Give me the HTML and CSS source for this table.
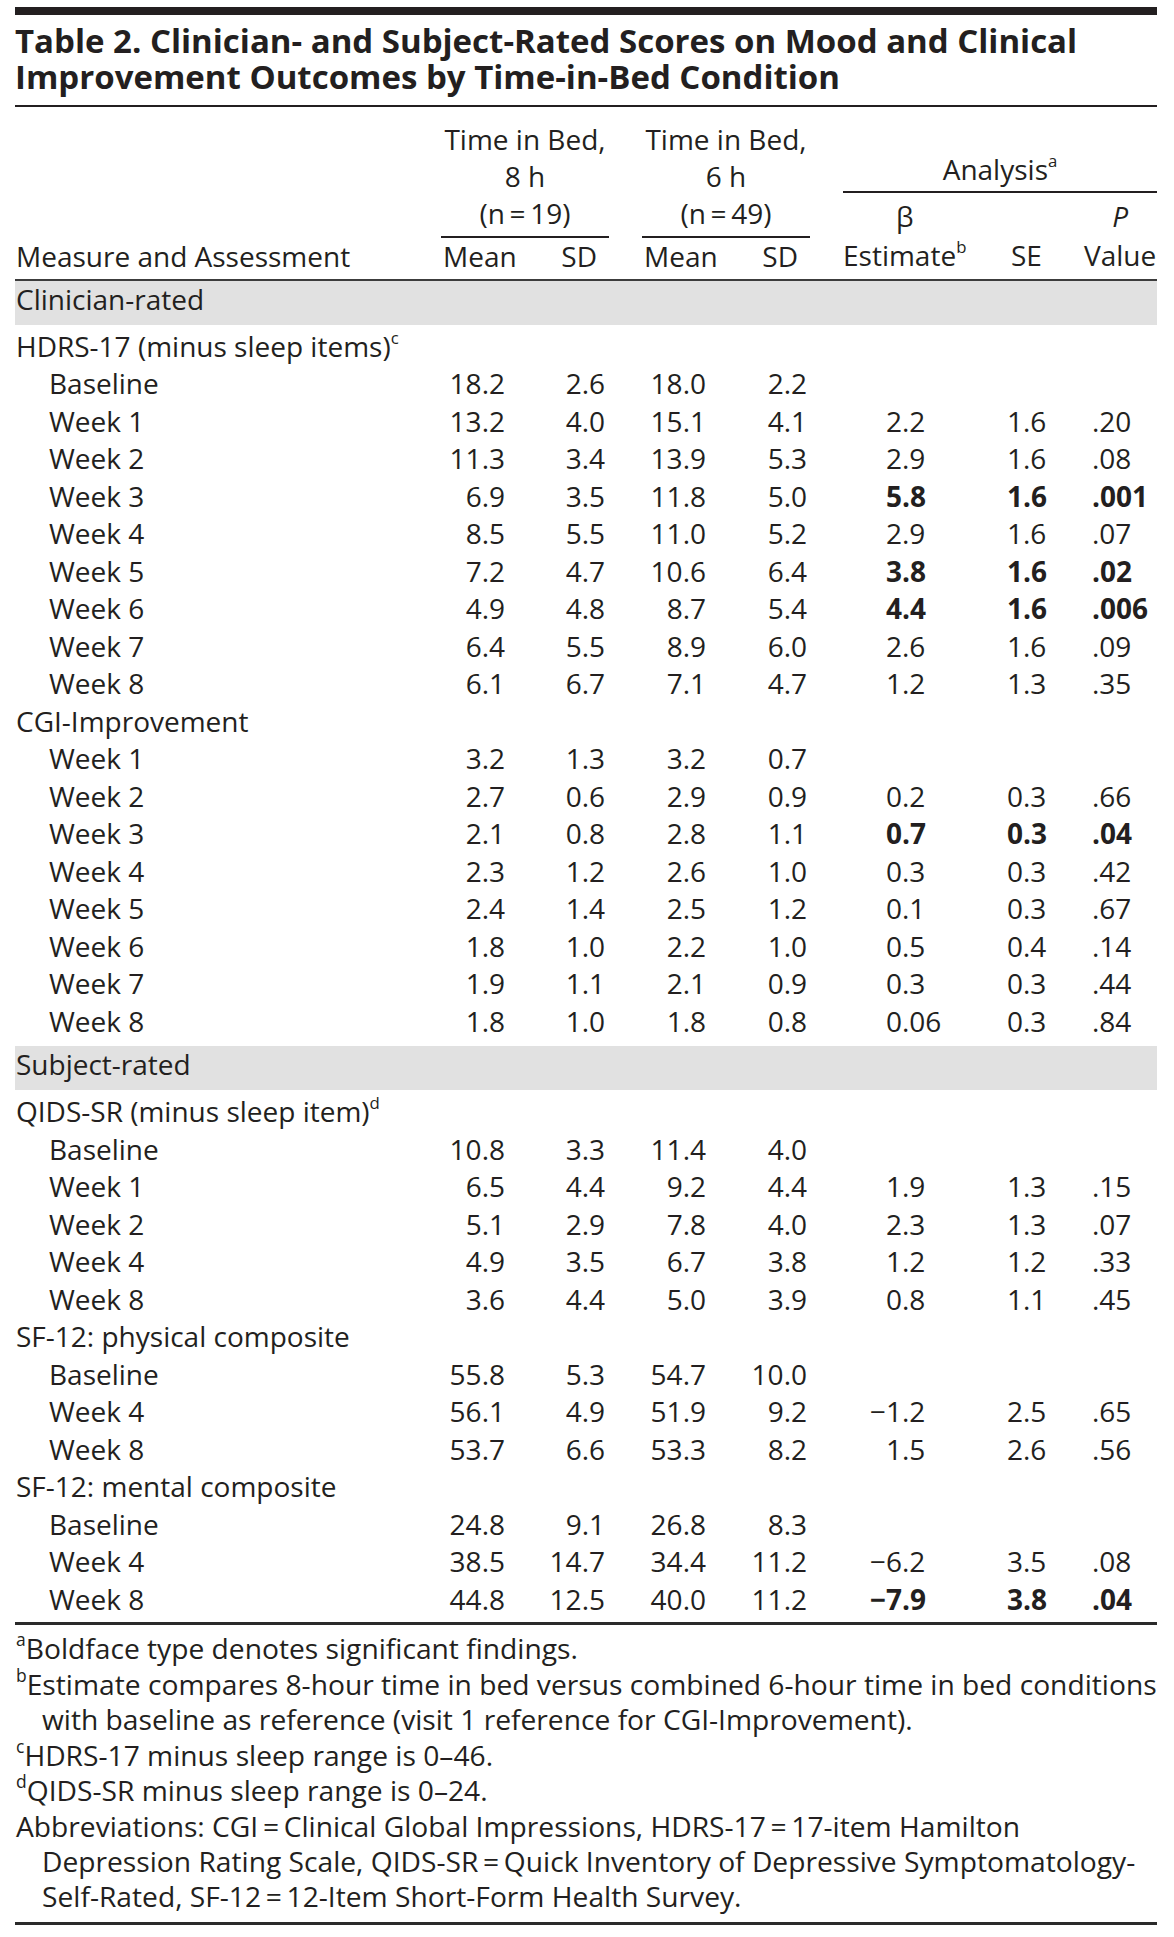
FILE: index.html
```html
<!DOCTYPE html>
<html lang="en">
<head>
<meta charset="utf-8">
<title>Table 2</title>
<link rel="stylesheet" href="styles.css">
</head>
<body>
<div class="page">
  <div class="toprule"></div>
  <h1 class="title">Table 2. Clinician- and Subject-Rated Scores on Mood and Clinical<br>Improvement Outcomes by Time-in-Bed Condition</h1>

  <div class="thead">
    <div class="h-lbl">Measure and Assessment</div>
    <div class="grp">
      <div class="grp-t">Time in Bed,<br>8 h<br>(n&#8201;=&#8201;19)</div>
      <div class="grp-sub"><span class="h-mean">Mean</span><span class="h-sd">SD</span></div>
    </div>
    <div class="grp">
      <div class="grp-t">Time in Bed,<br>6 h<br>(n&#8201;=&#8201;49)</div>
      <div class="grp-sub"><span class="h-mean">Mean</span><span class="h-sd">SD</span></div>
    </div>
    <div class="ana">
      <div class="ana-t">Analysis<sup>a</sup></div>
      <div class="ana-sub">
        <div class="h-est">β<br>Estimate<sup>b</sup></div>
        <div class="h-se">SE</div>
        <div class="h-p"><i>P</i><br>Value</div>
      </div>
    </div>
  </div>

  <div class="tbody">
    <div class="band">Clinician-rated</div>
    <div class="row"><span class="lbl">HDRS-17 (minus sleep items)<sup>c</sup></span></div>
    <div class="row"><span class="lbl sub">Baseline</span><span>18.2</span><span>2.6</span><span>18.0</span><span>2.2</span></div>
    <div class="row"><span class="lbl sub">Week 1</span><span>13.2</span><span>4.0</span><span>15.1</span><span>4.1</span><span><span class="ip">2</span>.2</span><span>1.6</span><span>.20</span></div>
    <div class="row"><span class="lbl sub">Week 2</span><span>11.3</span><span>3.4</span><span>13.9</span><span>5.3</span><span><span class="ip">2</span>.9</span><span>1.6</span><span>.08</span></div>
    <div class="row sig"><span class="lbl sub">Week 3</span><span>6.9</span><span>3.5</span><span>11.8</span><span>5.0</span><span><span class="ip">5</span>.8</span><span>1.6</span><span>.001</span></div>
    <div class="row"><span class="lbl sub">Week 4</span><span>8.5</span><span>5.5</span><span>11.0</span><span>5.2</span><span><span class="ip">2</span>.9</span><span>1.6</span><span>.07</span></div>
    <div class="row sig"><span class="lbl sub">Week 5</span><span>7.2</span><span>4.7</span><span>10.6</span><span>6.4</span><span><span class="ip">3</span>.8</span><span>1.6</span><span>.02</span></div>
    <div class="row sig"><span class="lbl sub">Week 6</span><span>4.9</span><span>4.8</span><span>8.7</span><span>5.4</span><span><span class="ip">4</span>.4</span><span>1.6</span><span>.006</span></div>
    <div class="row"><span class="lbl sub">Week 7</span><span>6.4</span><span>5.5</span><span>8.9</span><span>6.0</span><span><span class="ip">2</span>.6</span><span>1.6</span><span>.09</span></div>
    <div class="row"><span class="lbl sub">Week 8</span><span>6.1</span><span>6.7</span><span>7.1</span><span>4.7</span><span><span class="ip">1</span>.2</span><span>1.3</span><span>.35</span></div>
    <div class="row"><span class="lbl">CGI-Improvement</span></div>
    <div class="row"><span class="lbl sub">Week 1</span><span>3.2</span><span>1.3</span><span>3.2</span><span>0.7</span></div>
    <div class="row"><span class="lbl sub">Week 2</span><span>2.7</span><span>0.6</span><span>2.9</span><span>0.9</span><span><span class="ip">0</span>.2</span><span>0.3</span><span>.66</span></div>
    <div class="row sig"><span class="lbl sub">Week 3</span><span>2.1</span><span>0.8</span><span>2.8</span><span>1.1</span><span><span class="ip">0</span>.7</span><span>0.3</span><span>.04</span></div>
    <div class="row"><span class="lbl sub">Week 4</span><span>2.3</span><span>1.2</span><span>2.6</span><span>1.0</span><span><span class="ip">0</span>.3</span><span>0.3</span><span>.42</span></div>
    <div class="row"><span class="lbl sub">Week 5</span><span>2.4</span><span>1.4</span><span>2.5</span><span>1.2</span><span><span class="ip">0</span>.1</span><span>0.3</span><span>.67</span></div>
    <div class="row"><span class="lbl sub">Week 6</span><span>1.8</span><span>1.0</span><span>2.2</span><span>1.0</span><span><span class="ip">0</span>.5</span><span>0.4</span><span>.14</span></div>
    <div class="row"><span class="lbl sub">Week 7</span><span>1.9</span><span>1.1</span><span>2.1</span><span>0.9</span><span><span class="ip">0</span>.3</span><span>0.3</span><span>.44</span></div>
    <div class="row"><span class="lbl sub">Week 8</span><span>1.8</span><span>1.0</span><span>1.8</span><span>0.8</span><span><span class="ip">0</span>.06</span><span>0.3</span><span>.84</span></div>

    <div class="band band-2">Subject-rated</div>
    <div class="row"><span class="lbl">QIDS-SR (minus sleep item)<sup>d</sup></span></div>
    <div class="row"><span class="lbl sub">Baseline</span><span>10.8</span><span>3.3</span><span>11.4</span><span>4.0</span></div>
    <div class="row"><span class="lbl sub">Week 1</span><span>6.5</span><span>4.4</span><span>9.2</span><span>4.4</span><span><span class="ip">1</span>.9</span><span>1.3</span><span>.15</span></div>
    <div class="row"><span class="lbl sub">Week 2</span><span>5.1</span><span>2.9</span><span>7.8</span><span>4.0</span><span><span class="ip">2</span>.3</span><span>1.3</span><span>.07</span></div>
    <div class="row"><span class="lbl sub">Week 4</span><span>4.9</span><span>3.5</span><span>6.7</span><span>3.8</span><span><span class="ip">1</span>.2</span><span>1.2</span><span>.33</span></div>
    <div class="row"><span class="lbl sub">Week 8</span><span>3.6</span><span>4.4</span><span>5.0</span><span>3.9</span><span><span class="ip">0</span>.8</span><span>1.1</span><span>.45</span></div>
    <div class="row"><span class="lbl">SF-12: physical composite</span></div>
    <div class="row"><span class="lbl sub">Baseline</span><span>55.8</span><span>5.3</span><span>54.7</span><span>10.0</span></div>
    <div class="row"><span class="lbl sub">Week 4</span><span>56.1</span><span>4.9</span><span>51.9</span><span>9.2</span><span><span class="ip">−1</span>.2</span><span>2.5</span><span>.65</span></div>
    <div class="row"><span class="lbl sub">Week 8</span><span>53.7</span><span>6.6</span><span>53.3</span><span>8.2</span><span><span class="ip">1</span>.5</span><span>2.6</span><span>.56</span></div>
    <div class="row"><span class="lbl">SF-12: mental composite</span></div>
    <div class="row"><span class="lbl sub">Baseline</span><span>24.8</span><span>9.1</span><span>26.8</span><span>8.3</span></div>
    <div class="row"><span class="lbl sub">Week 4</span><span>38.5</span><span>14.7</span><span>34.4</span><span>11.2</span><span><span class="ip">−6</span>.2</span><span>3.5</span><span>.08</span></div>
    <div class="row sig"><span class="lbl sub">Week 8</span><span>44.8</span><span>12.5</span><span>40.0</span><span>11.2</span><span><span class="ip">−7</span>.9</span><span>3.8</span><span>.04</span></div>
  </div>

  <div class="notes">
    <p><sup>a</sup>Boldface type denotes significant findings.</p>
    <p><sup>b</sup>Estimate compares 8-hour time in bed versus combined 6-hour time in bed conditions<br>with baseline as reference (visit 1 reference for CGI-Improvement).</p>
    <p><sup>c</sup>HDRS-17 minus sleep range is 0–46.</p>
    <p><sup>d</sup>QIDS-SR minus sleep range is 0–24.</p>
    <p>Abbreviations: CGI&#8201;=&#8201;Clinical Global Impressions, HDRS-17&#8201;=&#8201;17-item Hamilton<br>Depression Rating Scale, QIDS-SR&#8201;=&#8201;Quick Inventory of Depressive Symptomatology-<br>Self-Rated, SF-12&#8201;=&#8201;12-Item Short-Form Health Survey.</p>
  </div>
</div>
</body>
</html>
```

FILE: styles.css
```css
html, body {
  margin: 0;
  padding: 0;
  background: #ffffff;
}

body {
  color: #231f20;
  font-family: "Open Sans", "Noto Sans", sans-serif;
  font-size: 28px;
}

.page {
  width: 1142px;
  margin-left: 15px;
  padding-top: 7px;
}

.toprule {
  height: 8px;
  background: #231f20;
}

.title {
  margin: 0;
  padding: 7.6px 0 10.4px;
  font-size: 33px;
  font-weight: 700;
  line-height: 36px;
  letter-spacing: 0;
  white-space: nowrap;
  border-bottom: 2px solid #231f20;
}

sup {
  font-size: 0.6em;
  line-height: 0;
  vertical-align: 0.75em;
}

/* ---------- header ---------- */
.thead {
  display: flex;
  align-items: flex-end;
  padding: 14px 0 4px;
  border-bottom: 2px solid #3c3c3c;
  line-height: 37px;
}

.h-lbl {
  width: 425px;
  padding-left: 1px;
}

.grp {
  width: 168px;
  margin-right: 33px;
}

.grp-t {
  text-align: center;
  padding-bottom: 4px;
  border-bottom: 2px solid #231f20;
}

.grp-sub {
  display: flex;
  justify-content: space-between;
}

.h-mean {
  padding-left: 2px;
}

.h-sd {
  padding-right: 12px;
}

.ana {
  width: 314px;
}

.ana-t {
  text-align: center;
  padding-bottom: 3px;
  border-bottom: 2px solid #231f20;
}

.ana-sub {
  display: grid;
  grid-template-columns: 152px 75px 87px;
  align-items: end;
  padding-top: 4px;
  line-height: 39px;
}

.h-est {
  justify-self: start;
  text-align: center;
}

.h-se {
  padding-left: 16px;
}

.h-p {
  justify-self: start;
  padding-left: 14px;
  text-align: center;
}

/* ---------- body ---------- */
.tbody {
  padding-bottom: 4px;
  border-bottom: 3px solid #2a2a2a;
}

.band {
  height: 44px;
  line-height: 37.5px;
  padding-left: 1px;
  margin-bottom: 3px;
  background: #e1e1e1;
  box-sizing: border-box;
}

.band-2 {
  margin-top: 6px;
}

.row {
  display: grid;
  grid-template-columns: 426px 84px 84px 33px 84px 84px 33px 152px 75px 87px;
  height: 37.5px;
  line-height: 37.5px;
  white-space: nowrap;
}

.row > :nth-child(1) { grid-column: 1; }
.row > :nth-child(2) { grid-column: 2; text-align: right; padding-right: 20px; }
.row > :nth-child(3) { grid-column: 3; text-align: right; padding-right: 4px; }
.row > :nth-child(4) { grid-column: 5; text-align: right; padding-right: 20px; }
.row > :nth-child(5) { grid-column: 6; text-align: right; padding-right: 3px; }
.row > :nth-child(6) { grid-column: 8; }
.row > :nth-child(7) { grid-column: 9; padding-left: 12px; }
.row > :nth-child(8) { grid-column: 10; padding-left: 22px; }

.row.sig > :nth-child(n+6) {
  font-weight: 700;
}

.ip {
  display: inline-block;
  width: 59px;
  text-align: right;
}

.lbl {
  padding-left: 1px;
}

.lbl.sub {
  padding-left: 34px;
}

/* ---------- notes ---------- */
.notes {
  padding: 6px 0 7px;
  border-bottom: 3px solid #2a2a2a;
  font-size: 28.2px;
  line-height: 35.4px;
}

.notes p {
  margin: 0;
  padding-left: 27px;
  text-indent: -26px;
  white-space: nowrap;
}

.notes sup {
  font-size: 0.62em;
  vertical-align: 0.75em;
}
```
